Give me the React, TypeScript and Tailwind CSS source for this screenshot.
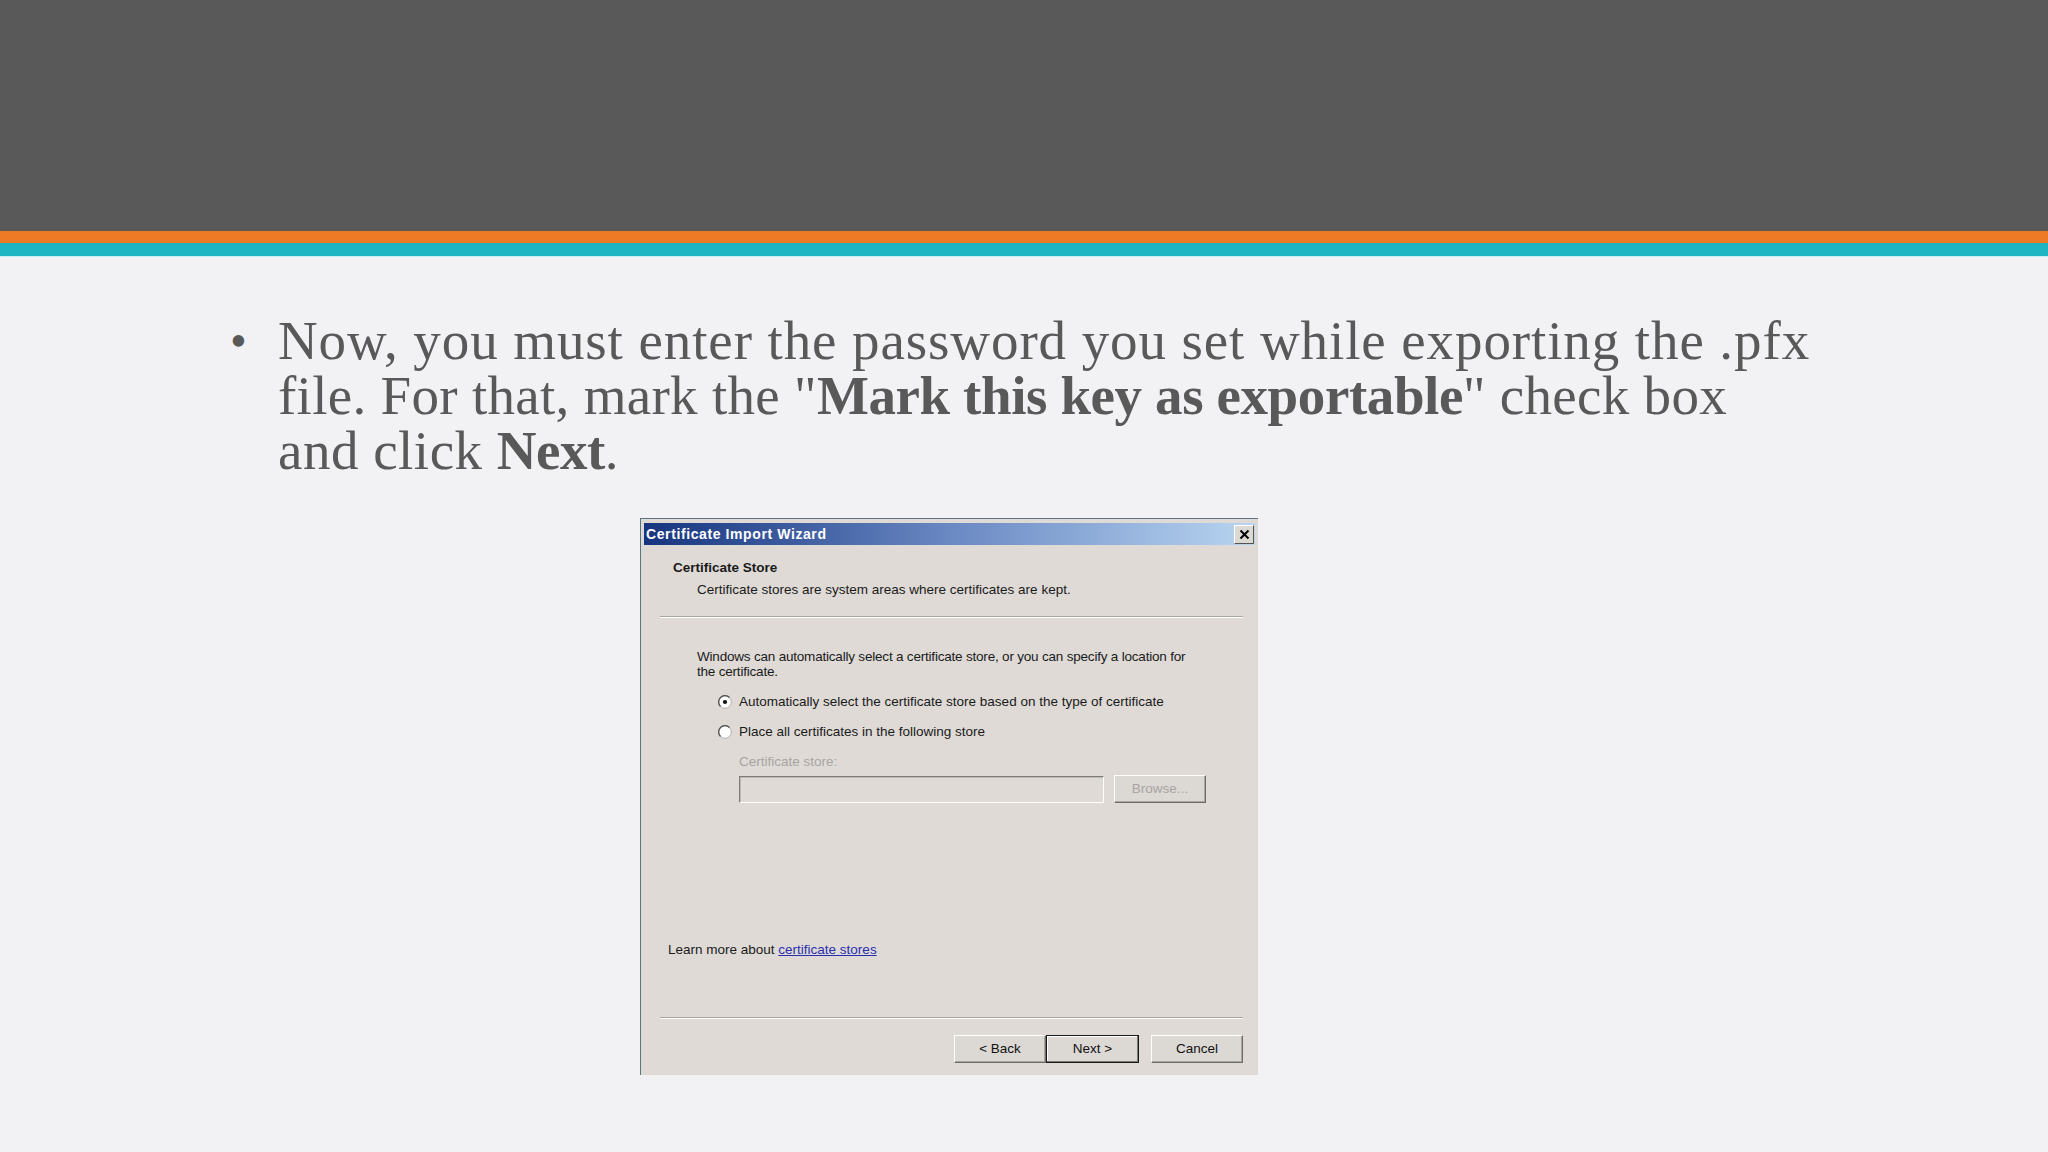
import React from "react";

function Radio({ checked }: { checked?: boolean }) {
  return (
    <svg width="14" height="14" viewBox="0 0 14 14" className="shrink-0">
      <circle cx="7" cy="7" r="6.3" fill="#ffffff" stroke="#b3afab" strokeWidth="1" />
      <path d="M2.5 11.5 A6.3 6.3 0 0 1 11.5 2.5" fill="none" stroke="#55524f" strokeWidth="1.3" />
      {checked && <circle cx="7" cy="7" r="2.1" fill="#111111" />}
    </svg>
  );
}

function WinButton({
  label,
  width,
  isDefault,
  disabled,
}: {
  label: string;
  width: string;
  isDefault?: boolean;
  disabled?: boolean;
}) {
  return (
    <div
      className={`${width} flex h-[28px] items-center justify-center border ${
        isDefault
          ? "border-[#1a1a1a] shadow-[inset_-1px_-1px_0_#7a7772,inset_1px_1px_0_#ffffff]"
          : "border-t-[#ffffff] border-l-[#ffffff] border-r-[#6f6c69] border-b-[#6f6c69] shadow-[inset_-1px_-1px_0_#a9a6a2]"
      } bg-[#dcd8d4] text-[13.5px] ${disabled ? "text-[#a8a5a2]" : "text-[#111111]"}`}
    >
      {label}
    </div>
  );
}

export default function App() {
  return (
    <div className="min-h-[1152px] w-full bg-[#f2f1f3] font-['Liberation_Sans',Arial,sans-serif]">
      {/* header band */}
      <div className="h-[231px] bg-[#595959]" />
      <div className="h-[12px] bg-[#ef7a26]" />
      <div className="h-[13px] bg-[#20b5c2]" />
      <div className="h-px bg-[#c9eef0]" />

      {/* bullet text */}
      <div className="flex pt-[56px] pl-[230px] font-['Liberation_Serif','Times_New_Roman',serif] text-[55px] leading-[55px] text-[#595959]">
        <span className="w-[48px] shrink-0 text-[48px]">•</span>
        <div className="whitespace-nowrap">
          <div className="tracking-[0.9px]">Now, you must enter the password you set while exporting the .pfx</div>
          <div className="tracking-[0.3px]">
            file. For that, mark the "<b className="tracking-[-0.4px]">Mark this key as exportable</b>" check box
          </div>
          <div className="tracking-[0.5px]">
            and click <b className="tracking-[-0.5px]">Next</b>.
          </div>
        </div>
      </div>

      {/* dialog */}
      <div className="mt-[40px] ml-[640px] flex h-[557px] w-[618px] flex-col border-t border-l border-t-[#5b7583] border-l-[#5b7583] bg-[#dfdad6] px-[3px] pt-[4px]">
        <div className="flex h-[22px] items-center justify-between bg-gradient-to-r from-[#17347f] via-[#6a88c2] to-[#b9d5f1] pr-[1px] pl-[2px]">
          <span className="text-[14px] font-bold tracking-[0.6px] text-white">Certificate Import Wizard</span>
          <div className="flex h-[19px] w-[20px] items-center justify-center border border-t-[#ffffff] border-l-[#ffffff] border-r-[#555] border-b-[#555] bg-[#dcd8d4]">
            <svg width="11" height="11" viewBox="0 0 11 11">
              <path d="M1.5 1.5 L9.5 9.5 M9.5 1.5 L1.5 9.5" stroke="#000" strokeWidth="2" />
            </svg>
          </div>
        </div>

        <div className="flex flex-1 flex-col text-[13.5px] text-[#1a1a1a]">
          <div className="mt-[15px] ml-[29px] h-[16px] leading-[16px] font-bold">Certificate Store</div>
          <div className="mt-[6px] ml-[53px] h-[16px] leading-[16px]">
            Certificate stores are system areas where certificates are kept.
          </div>
          <div className="mt-[18px] mr-[12px] ml-[16px] h-[2px] border-t border-b border-t-[#a9a5a1] border-b-[#ffffff]" />

          <div className="mt-[31px] ml-[53px] leading-[15px] tracking-[-0.2px]">
            Windows can automatically select a certificate store, or you can specify a location for
            <br />
            the certificate.
          </div>

          <div className="mt-[15px] ml-[74px] flex h-[16px] items-center gap-[7px]">
            <Radio checked />
            <span>Automatically select the certificate store based on the type of certificate</span>
          </div>
          <div className="mt-[14px] ml-[74px] flex h-[16px] items-center gap-[7px]">
            <Radio />
            <span>Place all certificates in the following store</span>
          </div>

          <div className="mt-[14px] ml-[95px] h-[16px] leading-[16px] text-[#a8a5a2]">Certificate store:</div>
          <div className="mt-[5px] ml-[95px] flex items-center gap-[10px]">
            <div className="h-[27px] w-[365px] border border-t-[#7d7a77] border-l-[#7d7a77] border-r-[#ffffff] border-b-[#ffffff] bg-[#dfdad6] shadow-[inset_1px_1px_0_#bdb9b5]" />
            <WinButton label="Browse..." width="w-[92px]" disabled />
          </div>

          <div className="mt-[139px] ml-[24px] h-[16px] leading-[16px]">
            Learn more about{" "}
            <span className="text-[#2a2fae] underline">certificate stores</span>
          </div>

          <div className="mt-[59px] mr-[12px] ml-[16px] h-[2px] border-t border-b border-t-[#a9a5a1] border-b-[#ffffff]" />

          <div className="mt-[16px] mr-[12px] flex justify-end">
            <WinButton label="< Back" width="w-[92px]" />
            <WinButton label="Next >" width="w-[93px]" isDefault />
            <div className="w-[12px]" />
            <WinButton label="Cancel" width="w-[92px]" />
          </div>
        </div>
      </div>
    </div>
  );
}
